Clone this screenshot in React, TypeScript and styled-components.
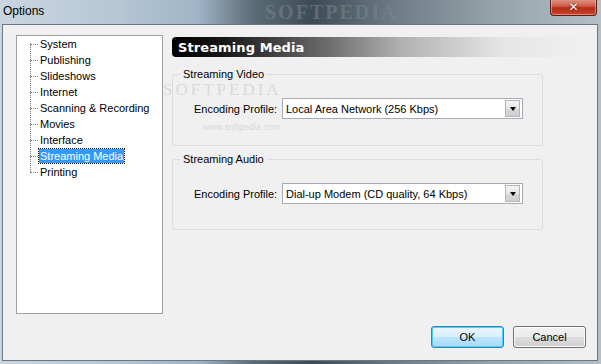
import styled, { createGlobalStyle } from 'styled-components'

const GlobalStyle = createGlobalStyle`
  html, body {
    margin: 0;
    padding: 0;
    width: 601px;
    height: 364px;
    overflow: hidden;
  }
  body {
    font-family: "Liberation Sans", Arial, sans-serif;
    font-size: 11px;
    color: #000;
  }
`

const Window = styled.div`
  position: relative;
  display: flex;
  flex-direction: column;
  width: 601px;
  height: 364px;
  box-sizing: border-box;
  padding: 0 3px 3px 2px;
  background: linear-gradient(
    to right,
    #c9d6e0 0%,
    #b5c6d4 20%,
    #9fb4c6 33%,
    #5d6d78 42%,
    #3c4b54 52%,
    #6e7d86 66%,
    #95a2aa 82%,
    #b4bfc6 100%
  );
  overflow: hidden;
`

const TitleBar = styled.div`
  position: relative;
  display: flex;
  align-items: center;
  height: 24px;
  margin-left: 1px;
`

const Title = styled.span`
  font-family: "Liberation Sans", Arial, sans-serif;
  font-size: 12px;
  color: #000;
  margin-top: -3px;
`

const Watermark = styled.span`
  position: absolute;
  left: 262px;
  top: 1px;
  font-family: "Liberation Serif", serif;
  font-weight: bold;
  font-size: 20px;
  line-height: 22px;
  letter-spacing: 2px;
  color: rgba(120, 136, 146, 0.55);
`

const CloseButton = styled.div`
  position: absolute;
  right: 1px;
  top: -1px;
  width: 45px;
  height: 16px;
  display: flex;
  align-items: center;
  justify-content: center;
  border: 1px solid #5b1f17;
  border-top: none;
  border-radius: 0 0 4px 4px;
  background: linear-gradient(to bottom, #e29a8a 0%, #cf5a45 45%, #b32d18 55%, #c8442c 100%);
  box-shadow: inset 0 0 0 1px rgba(255, 200, 190, 0.5);
  color: #fff;
  font-family: "DejaVu Sans", sans-serif;
  font-weight: bold;
  font-size: 12px;
  text-shadow: 0 0 2px #400;
`

const Client = styled.div`
  flex: 1;
  display: flex;
  flex-direction: column;
  background: #f0f0f0;
  border: 1px solid #6b7884;
  padding: 10px 11px 12px 13px;
  position: relative;
`

const Body = styled.div`
  display: flex;
  gap: 9px;
`

const Tree = styled.div`
  width: 145px;
  height: 277px;
  background: #fff;
  border: 1px solid #a0a0a0;
  box-sizing: content-box;
`

const TreeList = styled.div`
  position: relative;
  margin-left: 13px;
  &::before {
    content: '';
    position: absolute;
    left: 0;
    top: 7px;
    bottom: 8px;
    border-left: 1px dotted #808080;
  }
`

const TreeRow = styled.div`
  display: flex;
  align-items: center;
  height: 16px;
  &::before {
    content: '';
    width: 8px;
    border-top: 1px dotted #808080;
    margin-right: 1px;
  }
`

const TreeLabel = styled.span<{ selected?: boolean }>`
  padding: 0 1px;
  line-height: 14px;
  white-space: nowrap;
  background: ${p => (p.selected ? '#3399ff' : 'transparent')};
  color: ${p => (p.selected ? '#fff' : '#000')};
  outline: ${p => (p.selected ? '1px dotted #1a1a1a' : 'none')};
`

const Panel = styled.div`
  flex: 1;
  display: flex;
  flex-direction: column;
  padding-top: 2px;
`

const Header = styled.div`
  height: 20px;
  display: flex;
  align-items: center;
  padding-left: 6px;
  border-radius: 4px 0 0 4px;
  background: linear-gradient(to right, #000 0%, #161616 12%, #6e6e6e 38%, #b0b0b0 55%, #e6e6e6 80%, #f0f0f0 100%);
  color: #fff;
  font-weight: bold;
  font-size: 13px;
  font-family: "DejaVu Sans", sans-serif;
  letter-spacing: 0.1px;
`

const Group = styled.fieldset<{ top: number; bottom: number }>`
  margin: 0;
  margin-top: ${p => p.top}px;
  padding: 17px 0 ${p => p.bottom}px 0;
  border: 1px solid #d5dfe5;
  border-radius: 3px;
  width: 371px;
  box-sizing: border-box;
  & + & {
    margin-top: 7px;
  }
`

const Legend = styled.legend`
  padding: 0 3px;
  margin-left: 7px;
  font-size: 11px;
  line-height: 13px;
`

const Field = styled.div`
  display: flex;
  align-items: center;
  padding-left: 21px;
`

const FieldLabel = styled.span`
  width: 88px;
  white-space: nowrap;
`

const Select = styled.div`
  width: 241px;
  height: 21px;
  box-sizing: border-box;
  display: flex;
  align-items: center;
  justify-content: space-between;
  background: #fff;
  border: 1px solid #a5acb5;
  padding: 1px 1px 1px 3px;
`

const SelectValue = styled.span`
  white-space: nowrap;
`

const DropButton = styled.div`
  width: 15px;
  height: 17px;
  box-sizing: border-box;
  display: flex;
  align-items: center;
  justify-content: center;
  border: 1px solid #b5b5b5;
  background: linear-gradient(to bottom, #f4f4f4 0%, #e8e8e8 50%, #d8d8d8 51%, #cfcfcf 100%);
  margin-right: 1px;
`

const Arrow = styled.span`
  width: 0;
  height: 0;
  border-left: 3px solid transparent;
  border-right: 3px solid transparent;
  border-top: 4px solid #000;
`

const Footer = styled.div`
  margin-top: auto;
  display: flex;
  justify-content: flex-end;
  gap: 9px;
`

const Button = styled.div<{ primary?: boolean }>`
  width: 73px;
  height: 22px;
  box-sizing: border-box;
  display: flex;
  align-items: center;
  justify-content: center;
  border-radius: 3px;
  border: 1px solid ${p => (p.primary ? '#3c7fb1' : '#707070')};
  background: ${p =>
    p.primary
      ? 'linear-gradient(to bottom, #eaf6fd 0%, #d9f0fc 50%, #bee6fd 51%, #a7d9f5 100%)'
      : 'linear-gradient(to bottom, #f2f2f2 0%, #ebebeb 50%, #dddddd 51%, #cfcfcf 100%)'};
  box-shadow: inset 0 0 0 1px ${p => (p.primary ? '#48d0fa' : '#fcfcfc')};
`

const MarkBig = styled.span`
  position: absolute;
  left: 160px;
  top: 57px;
  pointer-events: none;
  font-family: "Liberation Serif", serif;
  font-size: 17px;
  line-height: 16px;
  letter-spacing: 3px;
  color: rgba(160, 160, 160, 0.3);
`

const MarkSmall = styled.span`
  position: absolute;
  left: 200px;
  top: 97px;
  pointer-events: none;
  font-size: 9px;
  line-height: 10px;
  color: rgba(160, 160, 160, 0.35);
`

const treeItems = [
  'System',
  'Publishing',
  'Slideshows',
  'Internet',
  'Scanning & Recording',
  'Movies',
  'Interface',
  'Streaming Media',
  'Printing',
]

export default function App() {
  return (
    <>
      <GlobalStyle />
      <Window>
        <TitleBar>
          <Title>Options</Title>
          <Watermark>SOFTPEDIA</Watermark>
          <CloseButton>✕</CloseButton>
        </TitleBar>
        <Client>
          <Body>
            <Tree>
              <TreeList>
                {treeItems.map(item => (
                  <TreeRow key={item}>
                    <TreeLabel selected={item === 'Streaming Media'}>{item}</TreeLabel>
                  </TreeRow>
                ))}
              </TreeList>
            </Tree>
            <Panel>
              <Header>Streaming Media</Header>
              <Group top={11} bottom={26}>
                <Legend>Streaming Video</Legend>
                <Field>
                  <FieldLabel>Encoding Profile:</FieldLabel>
                  <Select>
                    <SelectValue>Local Area Network (256 Kbps)</SelectValue>
                    <DropButton>
                      <Arrow />
                    </DropButton>
                  </Select>
                </Field>
              </Group>
              <Group top={11} bottom={25}>
                <Legend>Streaming Audio</Legend>
                <Field>
                  <FieldLabel>Encoding Profile:</FieldLabel>
                  <Select>
                    <SelectValue>Dial-up Modem (CD quality, 64 Kbps)</SelectValue>
                    <DropButton>
                      <Arrow />
                    </DropButton>
                  </Select>
                </Field>
              </Group>
            </Panel>
          </Body>
          <Footer>
            <Button primary>OK</Button>
            <Button>Cancel</Button>
          </Footer>
          <MarkBig>SOFTPEDIA</MarkBig>
          <MarkSmall>www.softpedia.com</MarkSmall>
        </Client>
      </Window>
    </>
  )
}
